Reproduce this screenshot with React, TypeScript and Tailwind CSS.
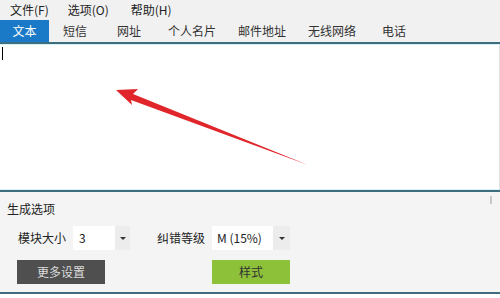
import React from "react";

const font = { fontFamily: '"Noto Sans CJK SC", "Noto Sans", sans-serif' };

export default function App() {
  const tabs = [
    { t: "文本", w: 49 },
    { t: "短信", w: 54 },
    { t: "网址", w: 51 },
    { t: "个人名片", w: 70 },
    { t: "邮件地址", w: 70 },
    { t: "无线网络", w: 74 },
    { t: "电话", w: 50 },
  ];
  return (
    <div className="w-[500px] h-[298px] bg-white overflow-hidden text-[12px] text-[#222] flex flex-col" style={font}>
      {/* menu */}
      <div className="h-[20px] bg-[#f1f1f1] flex items-center leading-none">
        <span className="ml-[10px]">文件(F)</span>
        <span className="ml-[19px]">选项(O)</span>
        <span className="ml-[22px]">帮助(H)</span>
      </div>
      {/* tabs */}
      <div className="h-[22px] bg-[#f1f1f1] flex items-stretch">
        {tabs.map((x, i) => (
          <div
            key={x.t}
            className={
              i === 0
                ? "bg-[#1b7ac8] text-white flex items-center justify-center"
                : "flex items-center pl-[14px] text-[#333]"
            }
            style={{ width: x.w }}
          >
            {x.t}
          </div>
        ))}
      </div>
      <div className="h-[2px] bg-[#3e6e7e]" />
      <div className="h-[1px] bg-[#d6f1f6]" />
      {/* text area */}
      <div className="relative h-[144px] bg-white border-r border-[#e2e2e2]">
        <div className="absolute left-[2px] top-[2px] w-[1px] h-[13px] bg-black" />
        <svg className="absolute left-0 top-0" width="500" height="144" viewBox="0 44 500 144">
          <polygon
            points="116,89 138,88 133,93 308,164 131,99 132,104"
            fill="#e0262a"
          />
        </svg>
      </div>
      <div className="h-[1px] bg-[#d6f1f6]" />
      <div className="h-[2px] bg-[#3e6e7e]" />
      {/* options panel */}
      <div className="relative h-[100px] bg-[#f4f4f4] flex flex-col">
        <div className="absolute right-[8px] top-[4px] w-[2px] h-[8px] bg-[#c8c8c8]" />
        <div className="pl-[7px] pt-[11px] leading-none">生成选项</div>
        <div className="flex items-center mt-[11px] h-[24px]">
          <span className="ml-[18px] w-[55px]">模块大小</span>
          <div className="w-[57px] h-[24px] bg-white flex items-center">
            <span className="pl-[6px] flex-1">3</span>
            <div className="w-[15px] h-full bg-[#ececec] flex items-center justify-center">
              <div className="w-0 h-0 border-l-[3px] border-r-[3px] border-t-[3px] border-l-transparent border-r-transparent border-t-[#333]" />
            </div>
          </div>
          <span className="ml-[27px] w-[55px]">纠错等级</span>
          <div className="w-[78px] h-[24px] bg-white flex items-center">
            <span className="pl-[5px] flex-1">M (15%)</span>
            <div className="w-[17px] h-full bg-[#ececec] flex items-center justify-center">
              <div className="w-0 h-0 border-l-[3px] border-r-[3px] border-t-[3px] border-l-transparent border-r-transparent border-t-[#333]" />
            </div>
          </div>
        </div>
        <div className="flex items-center mt-[10px]">
          <div className="ml-[17px] w-[88px] h-[24px] bg-[#4f4f4f] text-[#dcdcdc] flex items-center justify-center">
            更多设置
          </div>
          <div className="ml-[107px] w-[78px] h-[24px] bg-[#8dc13a] text-[#333] flex items-center justify-center">
            样式
          </div>
        </div>
      </div>
      <div className="h-[2px] bg-[#3e6e7e]" />
      <div className="flex-1 bg-white" />
    </div>
  );
}
